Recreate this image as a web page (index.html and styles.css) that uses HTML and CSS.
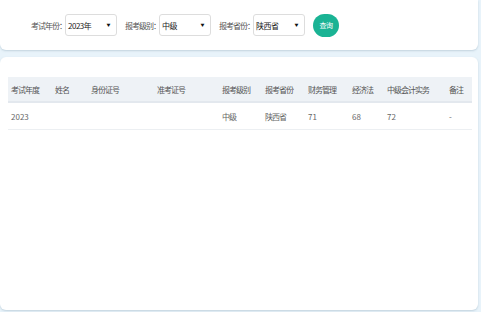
FILE: index.html
```html
<!DOCTYPE html>
<html lang="zh-CN">
<head>
    <meta charset="UTF-8">
    <meta name="viewport" content="width=device-width, initial-scale=1.0">
    <title>成绩查询</title>
    <link rel="stylesheet" href="styles.css">
</head>
<body>
    <div class="card search-card">
        <div class="filter">
            <label>考试年份：</label>
            <div class="select"><span>2023年</span><i>▼</i></div>
        </div>
        <div class="filter">
            <label>报考级别：</label>
            <div class="select"><span>中级</span><i>▼</i></div>
        </div>
        <div class="filter">
            <label>报考省份：</label>
            <div class="select"><span>陕西省</span><i>▼</i></div>
        </div>
        <button class="btn-search">查询</button>
    </div>

    <div class="card result-card">
        <table>
            <colgroup>
                <col style="width:44px">
                <col style="width:36px">
                <col style="width:66px">
                <col style="width:65px">
                <col style="width:43px">
                <col style="width:43px">
                <col style="width:44px">
                <col style="width:35px">
                <col style="width:62px">
                <col>
            </colgroup>
            <thead>
                <tr>
                    <th>考试年度</th>
                    <th>姓名</th>
                    <th>身份证号</th>
                    <th>准考证号</th>
                    <th>报考级别</th>
                    <th>报考省份</th>
                    <th>财务管理</th>
                    <th>经济法</th>
                    <th>中级会计实务</th>
                    <th>备注</th>
                </tr>
            </thead>
            <tbody>
                <tr>
                    <td>2023</td>
                    <td></td>
                    <td></td>
                    <td></td>
                    <td class="cn">中级</td>
                    <td class="cn">陕西省</td>
                    <td>71</td>
                    <td>68</td>
                    <td>72</td>
                    <td>-</td>
                </tr>
            </tbody>
        </table>
    </div>
</body>
</html>
```
FILE: styles.css
```css
body {
    margin: 0;
    padding: 0 3px 2px 0;
    background-color: #e8f3fa;
    font-family: "Noto Sans CJK SC", "Noto Sans", sans-serif;
    font-size: 8px;
    color: #666;
}
.card {
    background-color: #fff;
    box-shadow: 0 1px 2px rgba(120, 150, 170, 0.35);
}
.search-card {
    height: 50px;
    box-sizing: border-box;
    border-radius: 0 0 6px 6px;
    display: flex;
    align-items: center;
    padding: 0 0 0 31px;
    gap: 8px;
}
.filter {
    display: flex;
    align-items: center;
}
.filter label {
    color: #555;
    white-space: nowrap;
    letter-spacing: -1px;
    margin-right: -1px;
}
.select {
    width: 52px;
    height: 22px;
    box-sizing: border-box;
    border: 1px solid #ddd;
    border-radius: 3px;
    display: flex;
    align-items: center;
    justify-content: space-between;
    padding: 0 6px 0 2px;
    color: #222;
    letter-spacing: -0.5px;
}
.select i {
    font-style: normal;
    font-size: 4px;
    color: #111;
}
.btn-search {
    width: 26px;
    height: 23px;
    border: none;
    border-radius: 12px;
    background-color: #1ab394;
    color: #fff;
    font-family: inherit;
    font-size: 7px;
    letter-spacing: -0.5px;
    padding: 0;
}
.result-card {
    margin-top: 7px;
    height: 253px;
    box-sizing: border-box;
    border-radius: 6px;
    padding: 20px 7px 0 8px;
}
table {
    width: 464px;
    border-collapse: collapse;
    table-layout: fixed;
}
th, td {
    text-align: left;
    padding: 0 3px;
    font-weight: normal;
    white-space: nowrap;
}
th {
    height: 24px;
    background-color: #eef2f6;
    border-bottom: 2px solid #e3e8ee;
    color: #555;
    letter-spacing: -1px;
}
td {
    height: 26px;
    border-bottom: 1px solid #eceff2;
}
td.cn {
    letter-spacing: -1px;
}
```
